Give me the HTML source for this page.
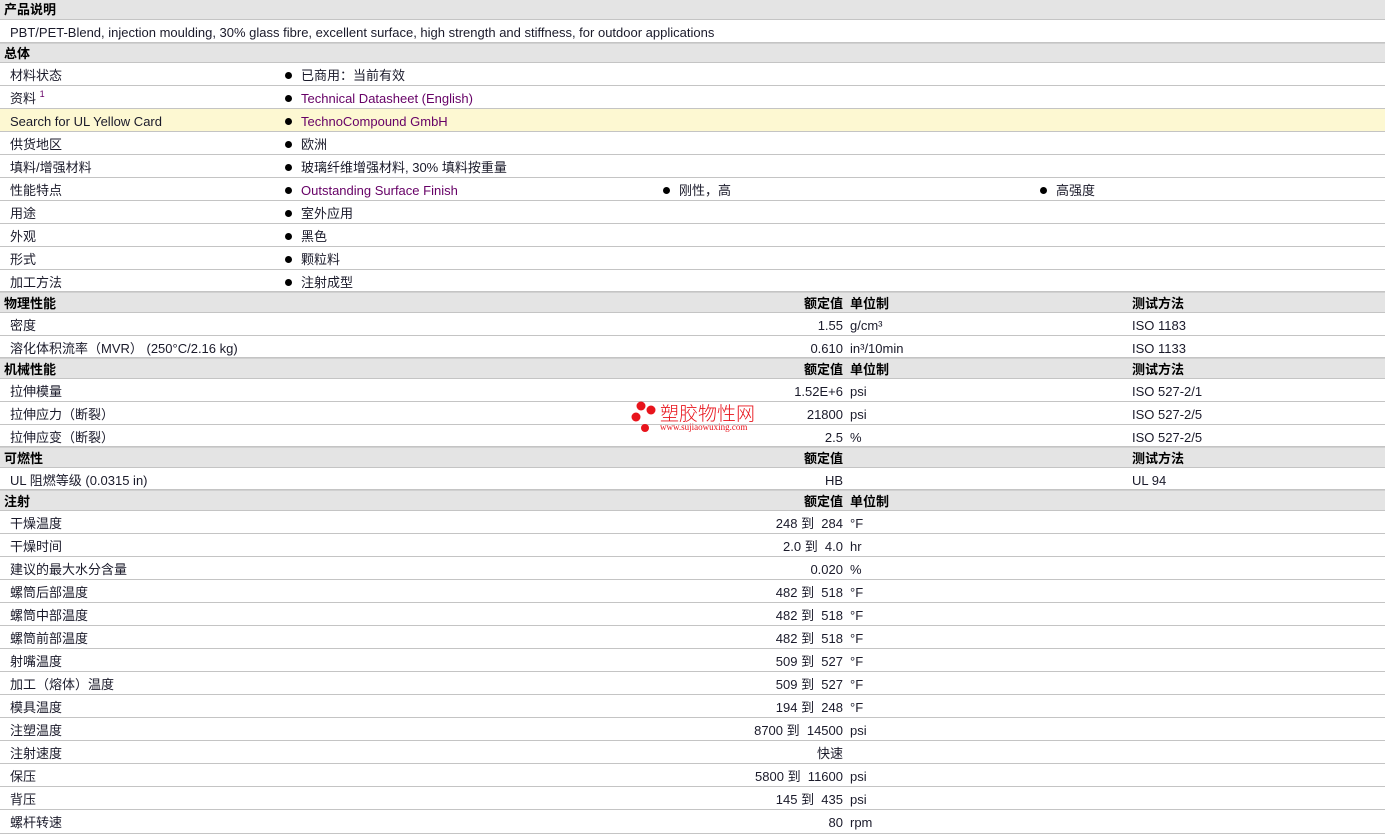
<!DOCTYPE html>
<html><head><meta charset="utf-8"><style>
*{margin:0;padding:0;box-sizing:border-box}
body{width:1385px;height:834px;background:#fff;font-family:"Liberation Sans","Noto Sans CJK SC",sans-serif;font-size:13px;color:#1a1a2a;position:relative;overflow:hidden}
.r{position:absolute;left:0;width:1385px;border-bottom:1px solid #c4c4c4;white-space:nowrap}
.h{height:21px;line-height:21px;background:#e4e4e4;font-weight:bold;color:#000;border-top:1px solid #d0d0d0}
.d{height:23px;line-height:25px;background:#fff}
.y{background:#fdf8d2}
.r span{position:absolute;top:0}
.l{left:10px}
.hl{left:4px}
.b{left:285px}
.b::before{content:"";position:absolute;left:0;top:9px;width:7px;height:7px;border-radius:50%;background:#000}
.b i{font-style:normal;margin-left:16px}
.c2{left:663px}.c3{left:1040px}
.v{right:542px;text-align:right}
.u{left:850px}
.t{left:1132px}
.k{color:#660066}
sup{font-size:9px;color:#660066;vertical-align:6px;line-height:0}
.wm{position:absolute;left:630px;top:400px;width:130px;height:36px}
</style></head><body>
<div class="r h" style="top:0;height:20px;border-top:0;line-height:20px"><span class="hl">产品说明</span></div>
<div class="r d" style="top:20px"><span class="l">PBT/PET-Blend, injection moulding, 30% glass fibre, excellent surface, high strength and stiffness, for outdoor applications</span></div>
<div class="r h" style="top:43px;height:20px;line-height:20px"><span class="hl">总体</span></div>
<div class="r d" style="top:63px"><span class="l">材料状态</span><span class="b"><i>已商用：当前有效</i></span></div>
<div class="r d" style="top:86px"><span class="l">资料 <sup>1</sup></span><span class="b"><i class="k">Technical Datasheet (English)</i></span></div>
<div class="r d y" style="top:109px"><span class="l">Search for UL Yellow Card</span><span class="b"><i class="k">TechnoCompound GmbH</i></span></div>
<div class="r d" style="top:132px"><span class="l">供货地区</span><span class="b"><i>欧洲</i></span></div>
<div class="r d" style="top:155px"><span class="l">填料/增强材料</span><span class="b"><i>玻璃纤维增强材料, 30% 填料按重量</i></span></div>
<div class="r d" style="top:178px"><span class="l">性能特点</span><span class="b"><i class="k">Outstanding Surface Finish</i></span><span class="b c2"><i>刚性，高</i></span><span class="b c3"><i>高强度</i></span></div>
<div class="r d" style="top:201px"><span class="l">用途</span><span class="b"><i>室外应用</i></span></div>
<div class="r d" style="top:224px"><span class="l">外观</span><span class="b"><i>黑色</i></span></div>
<div class="r d" style="top:247px"><span class="l">形式</span><span class="b"><i>颗粒料</i></span></div>
<div class="r d" style="top:270px;height:22px"><span class="l">加工方法</span><span class="b"><i>注射成型</i></span></div>
<div class="r h" style="top:292px"><span class="hl">物理性能</span><span class="v">额定值</span><span class="u">单位制</span><span class="t">测试方法</span></div>
<div class="r d" style="top:313px"><span class="l">密度</span><span class="v">1.55</span><span class="u">g/cm³</span><span class="t">ISO 1183</span></div>
<div class="r d" style="top:336px;height:22px"><span class="l">溶化体积流率（MVR） (250°C/2.16 kg)</span><span class="v">0.610</span><span class="u">in³/10min</span><span class="t">ISO 1133</span></div>
<div class="r h" style="top:358px"><span class="hl">机械性能</span><span class="v">额定值</span><span class="u">单位制</span><span class="t">测试方法</span></div>
<div class="r d" style="top:379px"><span class="l">拉伸模量</span><span class="v">1.52E+6</span><span class="u">psi</span><span class="t">ISO 527-2/1</span></div>
<div class="r d" style="top:402px"><span class="l">拉伸应力（断裂）</span><span class="v">21800</span><span class="u">psi</span><span class="t">ISO 527-2/5</span></div>
<div class="r d" style="top:425px;height:22px"><span class="l">拉伸应变（断裂）</span><span class="v">2.5</span><span class="u">%</span><span class="t">ISO 527-2/5</span></div>
<div class="r h" style="top:447px"><span class="hl">可燃性</span><span class="v">额定值</span><span class="t">测试方法</span></div>
<div class="r d" style="top:468px;height:22px"><span class="l">UL 阻燃等级 (0.0315 in)</span><span class="v">HB</span><span class="t">UL 94</span></div>
<div class="r h" style="top:490px"><span class="hl">注射</span><span class="v">额定值</span><span class="u">单位制</span></div>
<div class="r d" style="top:511px"><span class="l">干燥温度</span><span class="v">248 到 &nbsp;284</span><span class="u">°F</span></div>
<div class="r d" style="top:534px"><span class="l">干燥时间</span><span class="v">2.0 到 &nbsp;4.0</span><span class="u">hr</span></div>
<div class="r d" style="top:557px"><span class="l">建议的最大水分含量</span><span class="v">0.020</span><span class="u">%</span></div>
<div class="r d" style="top:580px"><span class="l">螺筒后部温度</span><span class="v">482 到 &nbsp;518</span><span class="u">°F</span></div>
<div class="r d" style="top:603px"><span class="l">螺筒中部温度</span><span class="v">482 到 &nbsp;518</span><span class="u">°F</span></div>
<div class="r d" style="top:626px"><span class="l">螺筒前部温度</span><span class="v">482 到 &nbsp;518</span><span class="u">°F</span></div>
<div class="r d" style="top:649px"><span class="l">射嘴温度</span><span class="v">509 到 &nbsp;527</span><span class="u">°F</span></div>
<div class="r d" style="top:672px"><span class="l">加工（熔体）温度</span><span class="v">509 到 &nbsp;527</span><span class="u">°F</span></div>
<div class="r d" style="top:695px"><span class="l">模具温度</span><span class="v">194 到 &nbsp;248</span><span class="u">°F</span></div>
<div class="r d" style="top:718px"><span class="l">注塑温度</span><span class="v">8700 到 &nbsp;14500</span><span class="u">psi</span></div>
<div class="r d" style="top:741px"><span class="l">注射速度</span><span class="v">快速</span></div>
<div class="r d" style="top:764px"><span class="l">保压</span><span class="v">5800 到 &nbsp;11600</span><span class="u">psi</span></div>
<div class="r d" style="top:787px"><span class="l">背压</span><span class="v">145 到 &nbsp;435</span><span class="u">psi</span></div>
<div class="r d" style="top:810px;height:24px"><span class="l">螺杆转速</span><span class="v">80</span><span class="u">rpm</span></div>
<div class="wm">
<svg width="30" height="36" style="position:absolute;left:0;top:0"><circle cx="11" cy="6" r="4.5" fill="#e8141c"/><circle cx="21" cy="10" r="4.5" fill="#e8141c"/><circle cx="6" cy="17" r="4.5" fill="#e8141c"/><circle cx="15" cy="28" r="4" fill="#e8141c"/></svg>
<div style="position:absolute;left:30px;top:2px;font-size:19px;line-height:21px;color:#e8141c;font-family:'Noto Sans CJK SC',sans-serif;font-weight:300">塑胶物性网</div>
<div style="position:absolute;left:30px;top:23px;font-size:9px;line-height:9px;color:#e8141c;font-family:'Liberation Serif',serif">www.sujiaowuxing.com</div>
</div>
</body></html>
